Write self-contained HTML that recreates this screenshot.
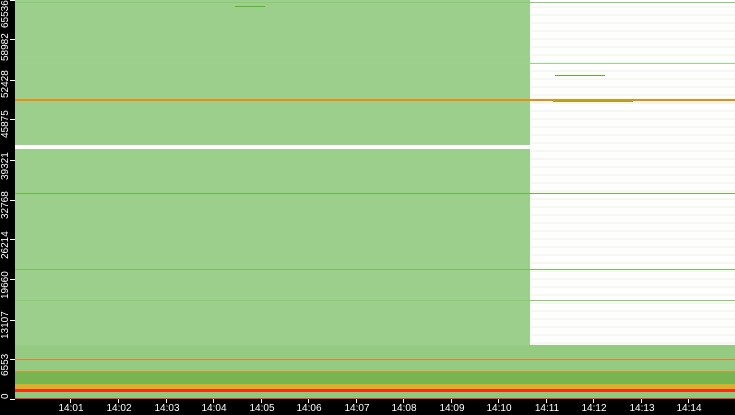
<!DOCTYPE html><html><head><style>
body{margin:0;width:735px;height:415px;background:#000;position:relative;overflow:hidden;font-family:"Liberation Sans",sans-serif}
.a{position:absolute}
.yl{position:absolute;left:0;width:60px;color:#fff;font-size:10px;line-height:11px;transform:rotate(-90deg);transform-origin:top left;white-space:nowrap}
.yt{position:absolute;left:10px;width:5px;height:1px;background:#fff}
.xl{position:absolute;top:403px;color:#fff;font-size:10px;width:40px;text-align:center}
.tk{position:absolute;top:399px;width:1px;height:4px;background:#fff}
.h{position:absolute;height:1px}
</style></head><body>
<div class="a" style="left:15px;top:0;width:720px;height:399px;background:#fff"></div>
<div class="a" style="left:15px;top:0;width:515px;height:399px;background:#9ccf8c"></div>
<div class="a" style="left:15px;top:145px;width:515px;height:4px;background:#fff"></div>
<div class="a" style="left:530px;top:0;width:205px;height:355px;background:repeating-linear-gradient(180deg,#fff 0 6px,#f3f9f0 6px 8px)"></div>
<div class="h" style="left:15px;top:99px;width:720px;height:2px;background:#f08a10"></div>
<div class="h" style="left:15px;top:2px;width:720px;background:#8ccc70"></div>
<div class="h" style="left:15px;top:63px;width:720px;background:#9ad38a"></div>
<div class="h" style="left:15px;top:193px;width:720px;background:#6cb84a"></div>
<div class="h" style="left:15px;top:269px;width:720px;background:#7cc060"></div>
<div class="h" style="left:15px;top:300px;width:720px;background:#8ccc70"></div>
<div class="h" style="left:555px;top:75px;width:50px;background:#60b030"></div>
<div class="h" style="left:553px;top:101px;width:80px;background:#70b840"></div>
<div class="h" style="left:235px;top:6px;width:30px;background:#60b030"></div>
<div class="a" style="left:15px;top:345px;width:720px;height:54px;background:#94cb80"></div>
<div class="h" style="left:15px;top:359px;width:720px;background:#e08030"></div>
<div class="h" style="left:15px;top:371px;width:720px;background:#e09030"></div>
<div class="a" style="left:15px;top:372px;width:720px;height:12px;background:#78b450"></div>
<div class="a" style="left:15px;top:384px;width:720px;height:5px;background:#d8b030"></div>
<div class="a" style="left:15px;top:389px;width:720px;height:3px;background:#f03010"></div>
<div class="a" style="left:15px;top:392px;width:720px;height:6px;background:#90c880"></div>
<div class="h" style="left:15px;top:398px;width:720px;background:#f04010"></div>
<div class="yt" style="top:399px"></div><div class="yl" style="top:399px">0</div>
<div class="yt" style="top:359px"></div><div class="yl" style="top:376px">6553</div>
<div class="yt" style="top:320px"></div><div class="yl" style="top:339px">13107</div>
<div class="yt" style="top:279px"></div><div class="yl" style="top:299px">19660</div>
<div class="yt" style="top:239px"></div><div class="yl" style="top:259px">26214</div>
<div class="yt" style="top:200px"></div><div class="yl" style="top:219px">32768</div>
<div class="yt" style="top:160px"></div><div class="yl" style="top:180px">39321</div>
<div class="yt" style="top:119px"></div><div class="yl" style="top:138px">45875</div>
<div class="yt" style="top:80px"></div><div class="yl" style="top:98px">52428</div>
<div class="yt" style="top:39px"></div><div class="yl" style="top:61px">58982</div>
<div class="yt" style="top:0px"></div><div class="yl" style="top:28px">65536</div>
<div class="tk" style="left:70px"></div><div class="xl" style="left:51px">14:01</div>
<div class="tk" style="left:118px"></div><div class="xl" style="left:99px">14:02</div>
<div class="tk" style="left:166px"></div><div class="xl" style="left:147px">14:03</div>
<div class="tk" style="left:213px"></div><div class="xl" style="left:194px">14:04</div>
<div class="tk" style="left:261px"></div><div class="xl" style="left:242px">14:05</div>
<div class="tk" style="left:308px"></div><div class="xl" style="left:289px">14:06</div>
<div class="tk" style="left:356px"></div><div class="xl" style="left:337px">14:07</div>
<div class="tk" style="left:403px"></div><div class="xl" style="left:384px">14:08</div>
<div class="tk" style="left:451px"></div><div class="xl" style="left:432px">14:09</div>
<div class="tk" style="left:498px"></div><div class="xl" style="left:479px">14:10</div>
<div class="tk" style="left:546px"></div><div class="xl" style="left:527px">14:11</div>
<div class="tk" style="left:593px"></div><div class="xl" style="left:574px">14:12</div>
<div class="tk" style="left:641px"></div><div class="xl" style="left:622px">14:13</div>
<div class="tk" style="left:688px"></div><div class="xl" style="left:669px">14:14</div>
</body></html>
